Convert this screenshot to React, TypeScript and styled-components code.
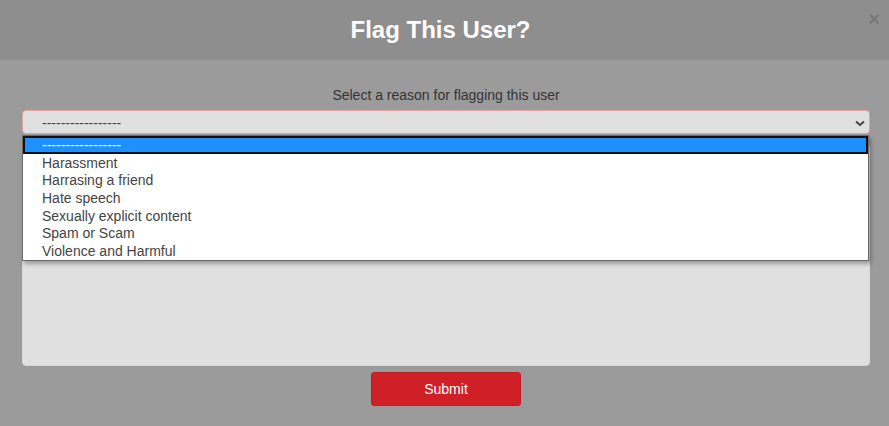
import styled, { createGlobalStyle } from "styled-components";

const GlobalStyle = createGlobalStyle`
  body {
    margin: 0;
    background: #9b9b9b;
    font-family: "Liberation Sans", Arial, sans-serif;
  }
`;

const reasons = [
  "Harassment",
  "Harrasing a friend",
  "Hate speech",
  "Sexually explicit content",
  "Spam or Scam",
  "Violence and Harmful",
];

// Modal header
const Header = styled.header`
  position: relative;
  height: 60px;
  padding-right: 8px;
  box-sizing: border-box;
  background: #8e8e8e;
  display: flex;
  align-items: center;
  justify-content: center;
`;

const Title = styled.h1`
  margin: 0 0 1px;
  color: #fff;
  font-size: 24px;
  font-weight: 700;
`;

const CloseButton = styled.button`
  position: absolute;
  top: 9px;
  right: 9px;
  padding: 0;
  border: none;
  background: none;
  color: #737373;
  font-family: "Liberation Sans", Arial, sans-serif;
  font-size: 20px;
  font-weight: 700;
  line-height: 20px;
  opacity: 0.8;
  cursor: pointer;
`;

// Form body
const Body = styled.form`
  display: flex;
  flex-direction: column;
  padding: 0 19px 0 22px;
`;

const Label = styled.label`
  margin-top: 27px;
  text-align: center;
  color: #333;
  font-size: 14px;
  line-height: 16px;
`;

const SelectWrap = styled.div`
  position: relative;
  margin-top: 7px;
`;

const SelectBox = styled.div`
  height: 24px;
  box-sizing: border-box;
  display: flex;
  align-items: center;
  justify-content: space-between;
  padding: 2px 4px 0 19px;
  background: #e0e0e0;
  border: 1px solid #e6a3a3;
  border-radius: 4px;
  color: #444;
  font-size: 14px;
`;

const Dropdown = styled.ul`
  position: absolute;
  top: calc(100% + 1px);
  left: 0;
  right: 1px;
  margin: 0;
  padding: 0;
  list-style: none;
  background: #fff;
  border: 1px solid #6c6c6c;
  box-shadow: 2px 3px 4px rgba(0, 0, 0, 0.3);
  z-index: 2;
`;

const Option = styled.li<{ $active?: boolean }>`
  height: 17.7px;
  line-height: 19px;
  padding-left: 19px;
  font-size: 14px;
  color: ${(p) => (p.$active ? "#fff" : "#444")};
  background: ${(p) => (p.$active ? "#1e90ff" : "transparent")};
  box-shadow: ${(p) => (p.$active ? "inset 0 0 0 2px #111" : "none")};
`;

const TextArea = styled.div`
  margin-top: 10px;
  height: 222px;
  box-sizing: border-box;
  background: #e0e0e0;
  border: 1px solid #d8d8d8;
  border-radius: 4px;
`;

const SubmitButton = styled.button`
  align-self: center;
  margin-top: 6px;
  width: 150px;
  height: 34px;
  background: #d02027;
  border: 1px solid #c41c23;
  border-radius: 3px;
  color: #fff;
  font-family: "Liberation Sans", Arial, sans-serif;
  font-size: 14px;
  cursor: pointer;
`;

const Chevron = () => (
  <svg width="10" height="7" viewBox="0 0 10 7">
    <polyline
      points="1,1.5 5,5 9,1.5"
      fill="none"
      stroke="#444"
      strokeWidth="2"
    />
  </svg>
);

const FlagUserModal = () => {
  return (
    <div>
      <Header>
        <Title>Flag This User?</Title>
        <CloseButton type="button">×</CloseButton>
      </Header>
      <Body onSubmit={(e) => e.preventDefault()}>
        <Label>Select a reason for flagging this user</Label>
        <SelectWrap>
          <SelectBox>
            <span>-----------------</span>
            <Chevron />
          </SelectBox>
          <Dropdown>
            <Option $active>-----------------</Option>
            {reasons.map((r) => (
              <Option key={r}>{r}</Option>
            ))}
          </Dropdown>
        </SelectWrap>
        <TextArea />
        <SubmitButton type="submit">Submit</SubmitButton>
      </Body>
    </div>
  );
};

export default function App() {
  return (
    <>
      <GlobalStyle />
      <FlagUserModal />
    </>
  );
}
